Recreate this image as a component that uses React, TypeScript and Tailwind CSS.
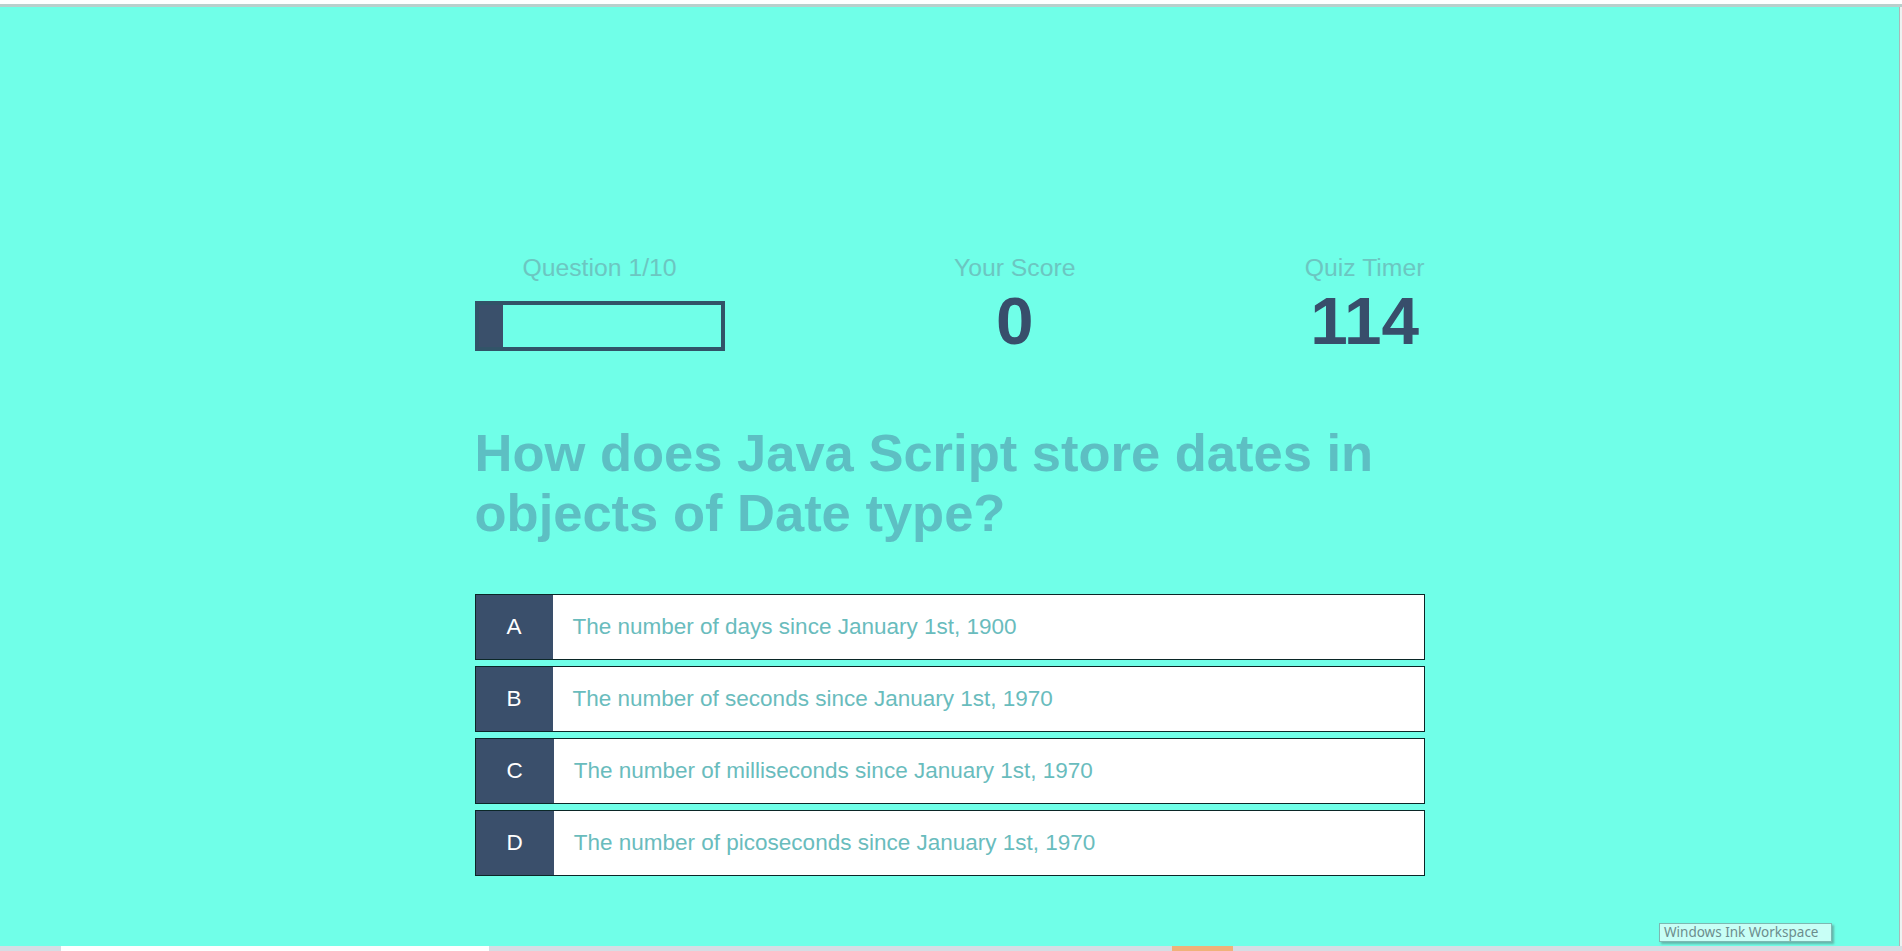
import { useState } from "react";

type Answer = { key: string; text: string };

const answers: Answer[] = [
  { key: "A", text: "The number of days since January 1st, 1900" },
  { key: "B", text: "The number of seconds since January 1st, 1970" },
  { key: "C", text: "The number of milliseconds since January 1st, 1970" },
  { key: "D", text: "The number of picoseconds since January 1st, 1970" },
];

function StatBlock({ label, value }: { label: string; value: number }) {
  return (
    <div className="flex flex-col items-center">
      <p className="text-[24.75px] text-[#6cc6c1]">{label}</p>
      <p className="text-[67.5px] font-bold text-[#384e6b]">{value}</p>
    </div>
  );
}

function AnswerRow({ answer, onPick }: { answer: Answer; onPick: (k: string) => void }) {
  return (
    <button
      onClick={() => onPick(answer.key)}
      className="flex h-[66px] w-full border border-[#0b2727] bg-white text-left text-[22.5px]"
    >
      <span className="flex h-full items-center bg-[#3a4f6b] px-[31px] text-white">{answer.key}</span>
      <span className="flex h-full items-center pl-5 text-[#69bcbd]">{answer.text}</span>
    </button>
  );
}

export default function App() {
  const [question] = useState(1);
  const total = 10;
  const [score, setScore] = useState(0);
  const timer = 114;

  return (
    <div className="relative flex h-screen flex-col overflow-hidden bg-white font-['Liberation_Sans',Arial,sans-serif] leading-[1.15]">
      <div className="h-[4px] bg-white" />
      <div className="h-[3px] bg-[#b9cfcc]" />

      <div className="flex flex-1">
        <main className="flex-1 bg-[#70ffe8] pt-[247px]">
          <div className="mx-auto w-[950px]">
            {/* header */}
            <div className="flex items-start justify-between">
              <div className="flex w-[250px] flex-col items-center">
                <p className="text-[24.75px] text-[#6cc6c1]">
                  Question {question}/{total}
                </p>
                <div className="mt-[19px] h-[50px] w-[250px] border-4 border-[#315468]">
                  <div className="h-full bg-[#3a506b]" style={{ width: `${(question / total) * 100}%` }} />
                </div>
              </div>
              <StatBlock label="Your Score" value={score} />
              <StatBlock label="Quiz Timer" value={timer} />
            </div>

            <h1 className="mt-[63px] text-[52.5px] font-bold text-[#5dbfc3]">
              How does Java Script store dates in objects of Date type?
            </h1>

            <div className="mt-[50px] flex flex-col gap-[6px]">
              {answers.map((a) => (
                <AnswerRow key={a.key} answer={a} onPick={(k) => k === "C" && setScore((s) => s + 1)} />
              ))}
            </div>
          </div>
        </main>
        <div className="w-[3px] border-l border-[#a9b8b7] bg-[#eef1f1]" />
      </div>

      {/* taskbar edge */}
      <div className="flex h-[5px] bg-[#d6dde4]">
        <div className="w-[61px]" />
        <div className="w-[428px] bg-white" />
        <div className="w-[683px]" />
        <div className="w-[61px] bg-[#f0b27a]" />
        <div className="flex-1" />
      </div>

      <div className="absolute left-[1659px] top-[923px] flex h-[19px] w-[173px] items-center overflow-hidden whitespace-nowrap border border-[#7db8b2] bg-[#c8fff6] px-[4px] font-['Noto_Sans',sans-serif] text-[13.5px] leading-none text-[#6c8d8d] shadow-[2px_2px_2px_rgba(90,110,110,0.5)]">
        Windows Ink Workspace
      </div>
    </div>
  );
}
